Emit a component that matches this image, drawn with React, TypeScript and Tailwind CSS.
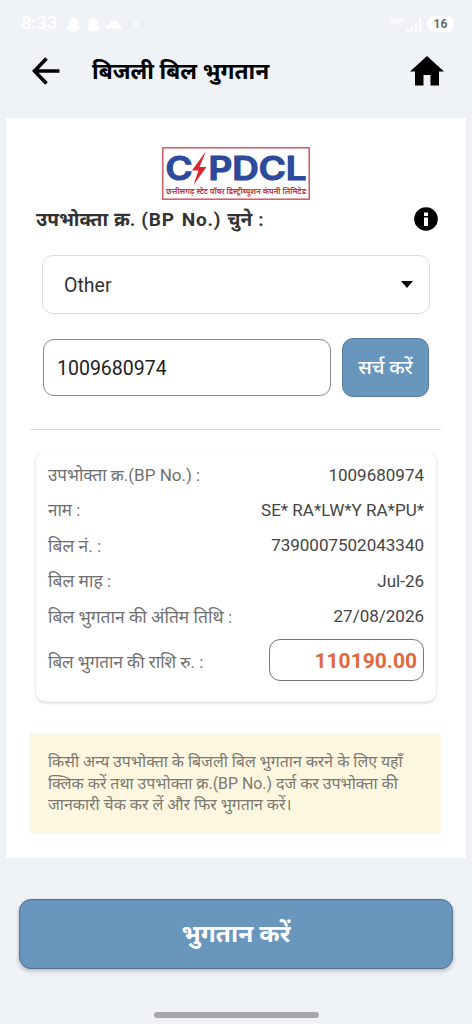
import { ReactNode } from "react";

const details = [
  { label: "उपभोक्ता क्र.(BP No.) :", value: "1009680974", size: "text-[17px]" },
  { label: "नाम :", value: "SE* RA*LW*Y RA*PU*", size: "text-[17px]" },
  { label: "बिल नं. :", value: "7390007502043340", size: "text-[17.4px]" },
  { label: "बिल माह :", value: "Jul-26", size: "text-[17.4px]" },
  { label: "बिल भुगतान की अंतिम तिथि :", value: "27/08/2026", size: "text-[17.4px]" },
];

const noticeLines = [
  "किसी अन्य उपभोक्ता के बिजली बिल भुगतान करने के लिए यहाँ",
  "क्लिक करें तथा उपभोक्ता क्र.(BP No.) दर्ज कर उपभोक्ता की",
  "जानकारी चेक कर लें और फिर भुगतान करें।",
];

function Ghost() {
  return (
    <svg width="15" height="15" viewBox="0 0 15 15" fill="currentColor">
      <path d="M7.5 0.5c2.7 0 4.4 1.7 4.4 4v2.7c0 1.8 1 3.2 2.8 4l-2.4 1.3-.7 1.2c-1.5-.3-2.4.8-4.1.8s-2.6-1.1-4.1-.8l-.7-1.2-2.4-1.3c1.8-.8 2.8-2.2 2.8-4V4.500c0-2.3 1.7-4 4.4-4z" />
    </svg>
  );
}

function StatusBar() {
  return (
    <div className="flex h-12 items-center justify-between pl-[21px] pr-[18px] text-white">
      <div className="flex items-center">
        <span className="w-[45px] text-[18.5px] font-medium">8:33</span>
        <Ghost />
        <span className="w-[5px]" />
        <Ghost />
        <svg className="ml-[5px]" width="16" height="10" viewBox="0 0 16 10" fill="currentColor">
          <path d="M0 9.5C0 7 1.6 5.5 3.8 5.5 4.4 3 6 1.5 8.2 1.5s3.8 1.5 4.2 4c2 .2 3.6 1.7 3.6 4z" />
        </svg>
        <span className="ml-3 h-1 w-1 rounded-full bg-white" />
      </div>
      <div className="flex items-center">
        <span className="mb-[7px] text-[8px] font-bold leading-none">5G+</span>
        <svg className="ml-[3px] mr-[6px]" width="14" height="15" viewBox="0 0 14 15" fill="currentColor">
          <path d="M0 12h2v3H0zM4 9h2v6H4zM8 5h2v10H8zM12 1h2v14h-2z" />
        </svg>
        <span className="flex h-4 w-[27px] items-center justify-center rounded-full bg-white text-[12px] font-bold text-[#66686c]">
          16
        </span>
      </div>
    </div>
  );
}

function Header() {
  return (
    <header className="flex h-[70px] items-start pl-[31px] pr-[28px]">
      <svg className="mt-[9px]" width="29" height="28" viewBox="0 0 29 28" fill="none" stroke="#000" strokeWidth="3.6">
        <path d="M28.5 14H3.5M15.5 1.5L3.5 14l12 12.5" />
      </svg>
      <h1 className="ml-[32px] mt-[9px] flex-1 whitespace-nowrap text-[22.7px] font-bold leading-[30px] text-black">
        बिजली बिल भुगतान
      </h1>
      <svg className="mt-[8px]" width="34" height="30" viewBox="0 0 34 30" fill="#000">
        <path d="M17 0l17 15.5h-5V29.500h-8.500V19h-7v10.500H5v-14H0z" />
      </svg>
    </header>
  );
}

function Logo() {
  return (
    <svg className="mx-auto block overflow-visible" width="148" height="53" viewBox="0 0 148 53">
      <rect x="0.8" y="0.8" width="146.4" height="51.4" fill="#fff" stroke="#cf5a62" strokeWidth="1.5" />
      <g fill="#2d4a9b" stroke="#2d4a9b" strokeWidth="1.2" fontFamily="Inter, sans-serif" fontWeight="600" fontSize="32">
        <text x="3.5" y="33" textLength="27" lengthAdjust="spacingAndGlyphs">C</text>
        <text x="46.5" y="33" textLength="98" lengthAdjust="spacingAndGlyphs">PDCL</text>
      </g>
      <path d="M44 4L30 23.5h6.500L31.5 38 44.500 20h-7z" fill="#e0242e" />
      <text x="4" y="47" textLength="140" lengthAdjust="spacingAndGlyphs" fill="#c0404c" fontWeight="700" fontSize="7.3">
        छत्तीसगढ़ स्टेट पॉवर डिस्ट्रीब्यूशन कंपनी लिमिटेड
      </text>
    </svg>
  );
}

function Row({ label, size, children }: { label: string; size: string; children: ReactNode }) {
  return (
    <div className="flex h-[35.3px] items-center justify-between whitespace-nowrap text-[17px]">
      <span className={`${size} text-[#707070]`}>{label}</span>
      <span className="text-[#444]">{children}</span>
    </div>
  );
}

export default function App() {
  return (
    <div className="flex h-[1024px] w-[472px] flex-col overflow-hidden bg-[#eff3f8] font-[Roboto,'Noto_Sans',sans-serif]">
      <StatusBar />
      <Header />

      <main className="mx-[6px] h-[740px] shrink-0 bg-white px-6 pt-[29px]">
        <Logo />
        <div className="flex h-[38px] items-center justify-between pl-[6px] pr-1">
          <h2 className="whitespace-nowrap pt-[2px] text-[19.1px] font-bold text-[#333] [word-spacing:1.2px]">
            उपभोक्ता क्र. <span className="tracking-[0.8px]">(BP No.)</span> चुने :
          </h2>
          <svg width="24" height="24" viewBox="0 0 24 24">
            <circle cx="12" cy="12" r="11.8" fill="#000" />
            <path d="M10 5.5h4v3.500h-4zM10 10.500h4v8.500h-4z" fill="#fff" />
          </svg>
        </div>

        <button className="ml-3 mt-[17px] flex h-[59px] w-[388px] items-center justify-between rounded-[11px] border border-[#dedede] pl-[21px] pr-4 text-[19.5px] text-[#333]">
          <span className="pt-[2px]">Other</span>
          <svg width="12" height="7" viewBox="0 0 12 7">
            <path d="M0 0h12L6 7z" fill="#000" />
          </svg>
        </button>

        <div className="ml-[13px] mt-6 flex h-[59px] w-[386px] items-center justify-between">
          <input
            className="h-[57px] w-[288px] rounded-[11px] border border-[#8a8a8a] px-[13px] pt-[2px] text-[19.5px] text-[#222] outline-none"
            defaultValue="1009680974"
          />
          <button className="h-[59px] w-[87px] whitespace-nowrap rounded-[11px] border border-[#557a9a] bg-[#6996bc] text-[19.5px] font-medium text-white">
            सर्च करें
          </button>
        </div>

        <hr className="mt-8 w-[411px] border-[#dcdcdc]" />

        <section className="ml-[5px] mt-5 h-[252px] w-[402px] rounded-[11px] border border-t-[#f8f8f8] border-[#efefef] bg-white px-3 pt-[7px] shadow-[0_2px_2px_rgba(0,0,0,0.1)]">
          {details.map((item) => (
            <Row key={item.label} label={item.label} size={item.size}>
              {item.value}
            </Row>
          ))}
          <div className="mt-[5px] flex h-[42px] items-center justify-between whitespace-nowrap text-[17px] text-[#707070]">
            <span className="pt-1">बिल भुगतान की राशि रु. :</span>
            <span className="flex h-[42px] w-[155px] items-center justify-end rounded-[11px] border border-[#777] pr-[6px] pt-[2px] text-[21px] font-bold text-[#e2673c]">
              110190.00
            </span>
          </div>
        </section>

        <div className="mt-[31px] h-[101px] w-[411px] bg-[#fef7e0] pl-[18px] pt-[18px] text-[15.9px] leading-[21.5px] text-[#7c7970]">
          {noticeLines.map((line) => (
            <p key={line} className="whitespace-nowrap">{line}</p>
          ))}
        </div>
      </main>

      <button className="mx-[19px] mt-[41px] h-[70px] shrink-0 rounded-[12px] border border-[#4f7290] bg-[#6996bc] text-[24.5px] font-bold text-white shadow-[0_2px_4px_rgba(0,0,0,0.25)]">
        भुगतान करें
      </button>
      <div className="mx-auto mt-[43px] h-[6px] w-[165px] shrink-0 rounded-full bg-[#a6a7aa]" />
    </div>
  );
}
